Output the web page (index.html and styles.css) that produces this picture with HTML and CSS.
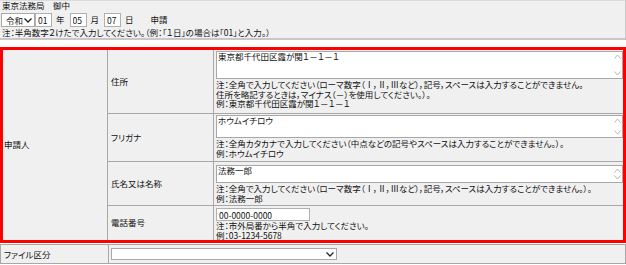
FILE: index.html
```html
<!DOCTYPE html>
<html lang="ja">
<head>
    <meta charset="UTF-8">
    <title>申請書入力</title>
    <link rel="stylesheet" href="styles.css">
</head>
<body>
    <!-- 宛先・申請日 -->
    <div class="head">
        <div class="line">東京法務局　御中</div>
        <div class="date-row">
            <span class="sel-wrap era">
                <select><option>令和</option></select>
                <svg class="chev" width="8" height="5" viewBox="0 0 8 5"><path d="M0.5 0.5 L4 4 L7.5 0.5" fill="none" stroke="#222" stroke-width="1.3"/></svg>
            </span>
            <input class="num" type="text" value="01"><span class="unit">年</span>
            <input class="num" type="text" value="05"><span class="unit">月</span>
            <input class="num" type="text" value="07"><span class="unit">日</span>
            <span class="apply">申請</span>
        </div>
        <div class="line">注：半角数字２けたで入力してください。（例：「１日」の場合は「01」と入力。）</div>
    </div>

    <!-- 申請人 -->
    <div class="applicant">
        <table class="form">
            <tr class="r-addr">
                <td class="c-app" rowspan="4">申請人</td>
                <td class="c-label">住所</td>
                <td class="c-field">
                    <span class="ta-wrap">
                        <textarea class="ta-addr">東京都千代田区霞が関１－１－１</textarea>
                        <svg class="sb-up" width="7" height="5" viewBox="0 0 7 5"><path d="M0.5 4.5 L3.5 1 L6.5 4.5" fill="none" stroke="#b4b4b4" stroke-width="1"/></svg>
                        <svg class="sb-down" width="7" height="5" viewBox="0 0 7 5"><path d="M0.5 0.5 L3.5 4 L6.5 0.5" fill="none" stroke="#b4b4b4" stroke-width="1"/></svg>
                    </span>
                    <div class="note">注：全角で入力してください（ローマ数字（Ⅰ，Ⅱ，Ⅲなど），記号，スペースは入力することができません。<br>住所を略記するときは，マイナス（－）を使用してください。）。<br>例：東京都千代田区霞が関１－１－１</div>
                </td>
            </tr>
            <tr class="r-kana">
                <td class="c-label">フリガナ</td>
                <td class="c-field">
                    <span class="ta-wrap">
                        <textarea class="ta-kana">ホウムイチロウ</textarea>
                        <svg class="sb-up" width="7" height="5" viewBox="0 0 7 5"><path d="M0.5 4.5 L3.5 1 L6.5 4.5" fill="none" stroke="#b4b4b4" stroke-width="1"/></svg>
                        <svg class="sb-down" width="7" height="5" viewBox="0 0 7 5"><path d="M0.5 0.5 L3.5 4 L6.5 0.5" fill="none" stroke="#b4b4b4" stroke-width="1"/></svg>
                    </span>
                    <div class="note">注：全角カタカナで入力してください（中点などの記号やスペースは入力することができません。）。<br>例：ホウムイチロウ</div>
                </td>
            </tr>
            <tr class="r-name">
                <td class="c-label">氏名又は名称</td>
                <td class="c-field">
                    <span class="ta-wrap">
                        <textarea class="ta-name">法務一郎</textarea>
                        <svg class="sb-up" width="7" height="5" viewBox="0 0 7 5"><path d="M0.5 4.5 L3.5 1 L6.5 4.5" fill="none" stroke="#b4b4b4" stroke-width="1"/></svg>
                        <svg class="sb-down" width="7" height="5" viewBox="0 0 7 5"><path d="M0.5 0.5 L3.5 4 L6.5 0.5" fill="none" stroke="#b4b4b4" stroke-width="1"/></svg>
                    </span>
                    <div class="note">注：全角で入力してください（ローマ数字（Ⅰ，Ⅱ，Ⅲなど），記号，スペースは入力することができません。）。<br>例：法務一郎</div>
                </td>
            </tr>
            <tr class="r-tel">
                <td class="c-label">電話番号</td>
                <td class="c-field">
                    <input class="tel" type="text" value="00-0000-0000">
                    <div class="note">注：市外局番から半角で入力してください。<br>例：03-1234-5678</div>
                </td>
            </tr>
        </table>
    </div>

    <!-- ファイル区分 -->
    <table class="form file">
        <tr>
            <td class="c-file">ファイル区分</td>
            <td class="c-field">
                <span class="sel-wrap kind">
                    <select><option></option></select>
                    <svg class="chev" width="8" height="5" viewBox="0 0 8 5"><path d="M0.5 0.5 L4 4 L7.5 0.5" fill="none" stroke="#222" stroke-width="1.3"/></svg>
                </span>
            </td>
        </tr>
    </table>
</body>
</html>
```

FILE: styles.css
```css
body {
    margin: 0;
    font-family: "Noto Sans CJK JP", sans-serif;
    font-size: 8.5px;
    line-height: 9.6px;
    font-feature-settings: "palt";
    color: #111;
    background: #fff;
}
input, select, textarea {
    font-family: inherit;
    font-size: inherit;
    font-feature-settings: inherit;
    color: #111;
    margin: 0;
    box-sizing: border-box;
}

/* head */
.head {
    background: #f0f0f0;
    border-top: 1px solid #dcdcdc;
    border-right: 1px solid #c8c8c8;
    border-bottom: 2px solid #c8c8c8;
    padding: 0 2px 1px;
}
.date-row {
    display: flex;
    align-items: center;
    height: 14px;
    margin: 2px 0 1px -1px;
}
.num {
    width: 17px;
    height: 14px;
    border: 1px solid #b0b0b0;
    padding: 0 0 0 2px;
    background: #fff;
}
.unit {
    margin: 0 5px 0 4px;
}
.apply {
    margin-left: 12px;
}
.sel-wrap {
    position: relative;
    display: inline-block;
}
.sel-wrap select {
    appearance: none;
    -webkit-appearance: none;
    background: #fff;
    border: 1px solid #a8a8a8;
    border-radius: 0;
    padding: 0 0 0 4px;
    display: block;
}
.sel-wrap .chev {
    position: absolute;
    right: 3px;
    top: 50%;
    margin-top: -2px;
}
.era select {
    width: 34px;
    height: 14px;
}

/* applicant */
.applicant {
    margin-top: 7px;
    border: 3px solid #f00;
}
.form {
    width: 100%;
    border-collapse: collapse;
    border-style: hidden;
}
.form td {
    background: #f0f0f0;
    border: 1px solid #a8a8a8;
    padding: 0;
}
.c-app {
    width: 103px;
    padding-left: 1px !important;
    vertical-align: middle;
}
.c-label {
    width: 102px;
    padding-left: 3px !important;
    vertical-align: middle;
}
.c-field {
    vertical-align: top;
    padding: 1px 0 0 2px !important;
}
.r-addr td { height: 62px; }
.r-kana td { height: 46px; }
.r-name td { height: 42px; }
.r-tel td { height: 33px; }

.ta-wrap {
    position: relative;
    display: block;
}
textarea {
    display: block;
    width: 100%;
    resize: none;
    overflow: hidden;
    border: 1px solid #a8a8a8;
    background: #fff;
    padding: 0 12px 0 1px;
    line-height: 9.6px;
}
.ta-addr { height: 28px; }
.ta-kana { height: 23px; }
.ta-name { height: 18px; margin-top: 2px; }
.sb-up {
    position: absolute;
    right: 2px;
    top: 3px;
}
.sb-down {
    position: absolute;
    right: 2px;
    bottom: 3px;
}
.note {
    margin-top: 1px;
}
.tel {
    display: block;
    width: 94px;
    height: 13px;
    border: 1px solid #b0b0b0;
    background: #fff;
    padding: 0 0 0 2px;
    margin-top: 1px;
}
.r-tel .note {
    margin-top: 0;
}

/* file kind */
.file {
    border-style: solid;
    border: 1px solid #a8a8a8;
    width: 626px;
    margin-top: 1px;
}
.file td {
    height: 18px;
    vertical-align: middle;
}
.c-file {
    width: 104px;
    padding-left: 3px !important;
}
.file .c-field {
    vertical-align: middle;
    padding: 0 0 0 2px !important;
}
.kind select {
    width: 226px;
    height: 12px;
}
```
